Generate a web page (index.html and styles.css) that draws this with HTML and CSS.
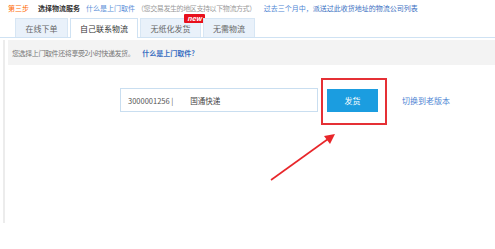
FILE: index.html
```html
<!DOCTYPE html>
<html lang="zh-CN">
  <head>
    <meta charset="UTF-8" />
    <meta name="viewport" content="width=device-width, initial-scale=1.0" />
    <title>选择物流服务</title>
    <link rel="stylesheet" href="styles.css">
  </head>
  <body>
    <div class="page">
      <div class="step">
        <span class="step-no">第三步</span>
        <span class="step-title">选择物流服务</span>
        <a class="step-link">什么是上门取件</a>
        <span class="step-tip">（您交易发生的地区支持以下物流方式）</span>
        <span class="step-recent">过去三个月中，<a>派送过此收货地址的物流公司列表</a></span>
      </div>

      <div class="tabs">
        <div class="tab tab-1">在线下单</div>
        <div class="tab tab-2 active">自己联系物流</div>
        <div class="tab tab-3">无纸化发货<span class="badge">new</span></div>
        <div class="tab tab-4">无需物流</div>
      </div>

      <div class="panel">
        <div class="info">
          <span>您选择上门取件还将享受2小时快递发货。</span>
          <a class="info-link">什么是上门取件?</a>
        </div>

        <div class="send-row">
          <div class="send-input">
            <span class="order-no">3000001256 |</span>
            <span class="company">国通快递</span>
          </div>
          <button class="send-btn">发货</button>
          <a class="old-link">切换到老版本</a>
        </div>
      </div>

      <!-- annotation -->
      <div class="mark-box"></div>
      <svg class="mark-arrow" width="495" height="249" viewBox="0 0 495 249">
        <line x1="271" y1="180" x2="328" y2="139" stroke="#e8262a" stroke-width="1.6" />
        <polygon points="335,134 324,136 330,144" fill="#e8262a" />
      </svg>
    </div>
  </body>
</html>
```

FILE: styles.css
```css
/* Basic Reset */
* {
  margin: 0;
  padding: 0;
  box-sizing: border-box;
}

body {
  font-family: "Noto Sans CJK SC", "DejaVu Sans", sans-serif;
  background-color: #fff;
  color: #666;
}

a {
  text-decoration: none;
  cursor: pointer;
}

.page {
  position: relative;
  width: 495px;
  height: 249px;
  overflow: hidden;
}

/* Step header */
.step {
  height: 16px;
  line-height: 16px;
  padding-left: 8px;
  font-size: 7px;
  white-space: nowrap;
  display: flex;
}

.step-no {
  color: #ff6a00;
}

.step-title {
  margin-left: 9px;
  color: #333;
  font-weight: bold;
}

.step-link {
  margin-left: 6px;
  color: #5b8fd8;
}

.step-tip {
  margin-left: 2px;
  color: #999;
  letter-spacing: -0.4px;
}

.step-recent {
  margin-left: 8px;
  color: #4f86d4;
}

.step-recent a {
  color: #3a6fc2;
}

/* Tabs */
.tabs {
  margin-top: 2px;
  height: 20px;
  padding-left: 15px;
  display: flex;
  gap: 2px;
  border-bottom: 1px solid #cfe2f3;
}

.tab {
  position: relative;
  height: 19px;
  line-height: 19px;
  text-align: center;
  font-size: 8px;
  color: #666;
  background-color: #e9f1fa;
  border: 1px solid #d7e6f4;
  border-bottom: none;
}

.tab.active {
  height: 20px;
  background-color: #fff;
  color: #333;
  border-color: #cfe2f3;
}

.tab-1 { width: 53px; }
.tab-2 { width: 68px; }
.tab-3 { width: 61px; }
.tab-4 { width: 52px; }

.badge {
  position: absolute;
  top: -5px;
  right: -5px;
  width: 21px;
  height: 9px;
  line-height: 9px;
  font-size: 7px;
  font-style: italic;
  font-weight: bold;
  color: #fff;
  background-color: #e8101c;
  border-radius: 1px;
}

/* Panel */
.panel {
  margin-top: 2px;
  margin-left: 3px;
  padding-left: 3px;
  height: 183px;
  border-left: 2px solid #ececec;
}

.info {
  height: 25px;
  padding-left: 4px;
  display: flex;
  align-items: center;
  font-size: 7px;
  letter-spacing: -0.4px;
  color: #777;
  background-color: #f3f3f3;
}

.info-link {
  margin-left: 8px;
  letter-spacing: 0;
  color: #3a6fc2;
  font-weight: bold;
}

.send-row {
  margin-top: 23px;
  padding-left: 112px;
  display: flex;
  align-items: center;
}

.send-input {
  width: 198px;
  height: 24px;
  padding-left: 7px;
  display: flex;
  align-items: center;
  font-size: 7.5px;
  color: #555;
  border: 1px solid #c9def0;
}

.company {
  margin-left: 17px;
  color: #444;
}

.send-btn {
  margin-left: 9px;
  width: 51px;
  height: 23px;
  font-family: inherit;
  font-size: 8px;
  color: #fff;
  background-color: #1b9de0;
  border: none;
}

.old-link {
  margin-left: 24px;
  font-size: 8px;
  color: #4f86d4;
}

/* Annotation overlay */
.mark-box {
  position: absolute;
  left: 321px;
  top: 78px;
  width: 66px;
  height: 47px;
  border: 2px solid #e53035;
}

.mark-arrow {
  position: absolute;
  left: 0;
  top: 0;
}
```
